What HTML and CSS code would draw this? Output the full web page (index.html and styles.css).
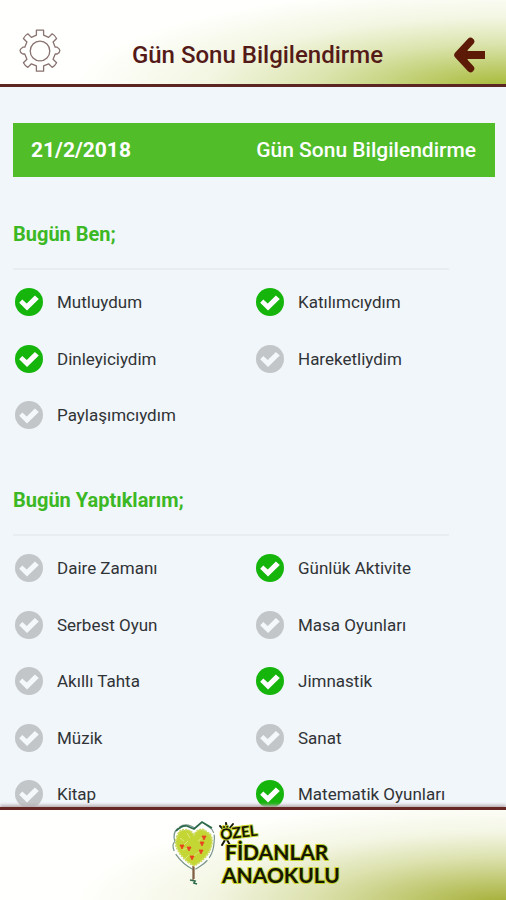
FILE: index.html
```html
<!DOCTYPE html>
<html lang="tr">
<head>
<meta charset="utf-8">
<meta name="viewport" content="width=device-width, initial-scale=1">
<title>Gün Sonu Bilgilendirme</title>
<link rel="stylesheet" href="styles.css">
</head>
<body>
<header class="topbar">
  <button class="icon-button" type="button" aria-label="Ayarlar">
    <svg width="44" height="44" viewBox="0 0 44 44" fill="none" stroke="#88726f" stroke-width="1.3" stroke-linejoin="round">
      <path d="M18.400 1.200h7.200v5l5 2.200 3.600-3.600q2.700 1.600 4.400 4.700l-3.500 3.500 2.100 5.200h2q5.400 3.300 0 6.800h-2l-2.100 5.200 3.500 3.500q-1.700 3.100-4.400 4.700l-3.600-3.600-5 2.100v5.300h-7.200v-5.300l-5-2.100-3.600 3.600q-2.700-1.600-4.400-4.700l3.500-3.500-2.100-5.200H4.800q-5.600-3.500 0-6.800h2l2.100-5.200-3.500-3.500q1.700-3.100 4.400-4.700l3.600 3.600 5-2.200z"/>
      <circle cx="22" cy="22" r="9.800"/>
    </svg>
  </button>
  <h1 class="topbar-title">Gün Sonu Bilgilendirme</h1>
  <button class="icon-button" type="button" aria-label="Geri">
    <svg width="34" height="36" viewBox="0 0 34 36" fill="none" stroke="#5d1a07" stroke-linejoin="round">
      <path d="M17.500 4.500L5 18l12.500 13.500" stroke-width="7.500" stroke-linecap="round"/>
      <path d="M8 18h24" stroke-width="8"/>
      <path d="M14 10L7 18l7 8z" fill="#5d1a07"/>
    </svg>
  </button>
</header>

<main class="content">
  <div class="banner">
    <strong>21/2/2018</strong>
    <span>Gün Sonu Bilgilendirme</span>
  </div>

  <section class="group">
    <h2>Bugün Ben;</h2>
    <div class="checks">
      <label><input type="checkbox" checked>Mutluydum</label>
      <label><input type="checkbox" checked>Katılımcıydım</label>
      <label><input type="checkbox" checked>Dinleyiciydim</label>
      <label><input type="checkbox">Hareketliydim</label>
      <label><input type="checkbox">Paylaşımcıydım</label>
    </div>
  </section>

  <section class="group">
    <h2>Bugün Yaptıklarım;</h2>
    <div class="checks">
      <label><input type="checkbox">Daire Zamanı</label>
      <label><input type="checkbox" checked>Günlük Aktivite</label>
      <label><input type="checkbox">Serbest Oyun</label>
      <label><input type="checkbox">Masa Oyunları</label>
      <label><input type="checkbox">Akıllı Tahta</label>
      <label><input type="checkbox" checked>Jimnastik</label>
      <label><input type="checkbox">Müzik</label>
      <label><input type="checkbox">Sanat</label>
      <label><input type="checkbox">Kitap</label>
      <label><input type="checkbox" checked>Matematik Oyunları</label>
    </div>
  </section>
</main>

<footer class="footer">
  <svg class="logo" width="172" height="68" viewBox="0 0 172 68" role="img" aria-label="Özel Fidanlar Anaokulu">
    <path d="M5 21Q2 12 8 7Q14 2 21 5L25 7L32 1L39 6Q46 10 44 22Q43 38 29 46L24 49Q12 43 5 32Q1 23 5 21" fill="#fff" stroke="#78958a" stroke-width="1.200" stroke-dasharray="15 2 24 3"/>
    <path d="M6 10Q12 4 17 5L24 8L32 1L42 7" fill="none" stroke="#2d6b4b" stroke-width="1.700"/>
    <path d="M7 16Q9 8 15 9Q20 8 24 14Q28 7 34 9L40 13Q44 20 40 29Q36 38 24 45Q12 38 8 29Q4 23 7 16z" fill="#c4d634" stroke="#cddb65" stroke-width="2" stroke-dasharray="2 1"/>
    <path d="M10 17l4 3m3-8l3 5m8 3l5-4m-20 13l6-3m5 9l6-5m-15 8l4-4m10-13l5 1m-16-2l-4 4" stroke="#dce77d" stroke-width="1"/>
    <path d="M23 45v14M24 46v12" stroke="#826048" stroke-width="1.300"/>
    <path d="M20 59l5 1-1 2 3 1" fill="none" stroke="#2d6b4b" stroke-width="1.700"/>
    <path d="M10 24h4l-2 4zM17 26h4l-2 4zM30 21h4l-2 4zM32 15h4l-2 4zM29 29h4l-2 4zM20 35h4l-2 4z" fill="#e8431e" stroke="#e8431e" stroke-width=".8"/>
    <path d="M50 5l4 4m2-7l1 6m6-5l-4 5M55 19l-3 5m5-5l3 5" stroke="#191a06" stroke-width="2" stroke-linecap="round"/>
    <g class="logo-text">
      <text x="51" y="19" font-size="15" transform="rotate(-7 51 19)">ÖZEL</text>
      <text x="55" y="39" font-size="21">FİDANLAR</text>
      <text x="52" y="62" font-size="21">ANAOKULU</text>
    </g>
  </svg>
</footer>
</body>
</html>
```

FILE: styles.css
```css
* { box-sizing: border-box; }

body {
  margin: 0;
  height: 100vh;
  display: flex;
  flex-direction: column;
  background: #f1f6fa;
  color: #303336;
  font-family: Roboto, "Liberation Sans", sans-serif;
}

.topbar {
  flex: none;
  display: flex;
  align-items: flex-end;
  justify-content: space-between;
  padding: 29px 19px 11px 18px;
  border-bottom: 3px solid #5b2522;
  background: radial-gradient(ellipse 85% 120% at 100% 105%, #a4b832 0%, #c0ce70 22%, #dce5b0 45%, #f3f6e2 70%, #fffffd 100%) #fffffd;
}

.icon-button {
  display: flex;
  padding: 0;
  border: 0;
  background: none;
}

.topbar-title {
  margin: 0;
  color: #541a18;
  font-size: 24px;
  line-height: 36px;
  font-weight: 500;
}

.content {
  flex: 1;
  min-height: 0;
  overflow: hidden;
  padding: 36px 11px 0 13px;
}

.banner {
  display: flex;
  align-items: center;
  justify-content: space-between;
  padding: 15px 19px 15px 18px;
  background: #50bd29;
  color: #fff;
  font-size: 21px;
  line-height: 24px;
  font-weight: 500;
}

.banner strong { font-weight: 700; }

.group { padding-top: 45px; }

.group h2 {
  margin: 0 46px 4px 0;
  padding-bottom: 22px;
  border-bottom: 2px solid #e8edf1;
  color: #3cb824;
  font-size: 20px;
  line-height: 24px;
  font-weight: 700;
}

.checks {
  display: grid;
  grid-template-columns: 1fr 1fr;
  grid-auto-rows: 56px 57px;
}

.checks label {
  display: flex;
  align-items: center;
  gap: 14px;
  padding-left: 2px;
  font-size: 17px;
  line-height: 24px;
}

.checks input {
  appearance: none;
  flex: none;
  width: 28px;
  height: 28px;
  margin: 0;
  border-radius: 50%;
  background: #c3c6c8;
}

.checks input::before {
  content: "";
  display: block;
  height: 28px;
  background: #f5f8fa;
  clip-path: polygon(15% 53%, 26% 41%, 42% 55%, 71% 27%, 85% 39%, 43% 80%);
}

.checks input:checked { background: #15b50c; }
.checks input:checked::before { background: #fff; }

.footer {
  flex: none;
  display: flex;
  justify-content: center;
  padding: 11px 0 11px 6px;
  border-top: 3px solid #652624;
  box-shadow: 0 -2px 3px #b8aeb2;
  background: radial-gradient(ellipse 85% 115% at 100% 105%, #a2ad32 0%, #bfc76e 22%, #dde2b0 46%, #f4f6e4 70%, #fffffd 100%) #fffffd;
}

.logo { overflow: visible; }

.logo-text {
  fill: #151604;
  stroke: #c5d42d;
  stroke-width: 2px;
  stroke-linejoin: round;
  paint-order: stroke;
  font-family: "Comic Sans MS", Lato, sans-serif;
  font-weight: 700;
}
```
